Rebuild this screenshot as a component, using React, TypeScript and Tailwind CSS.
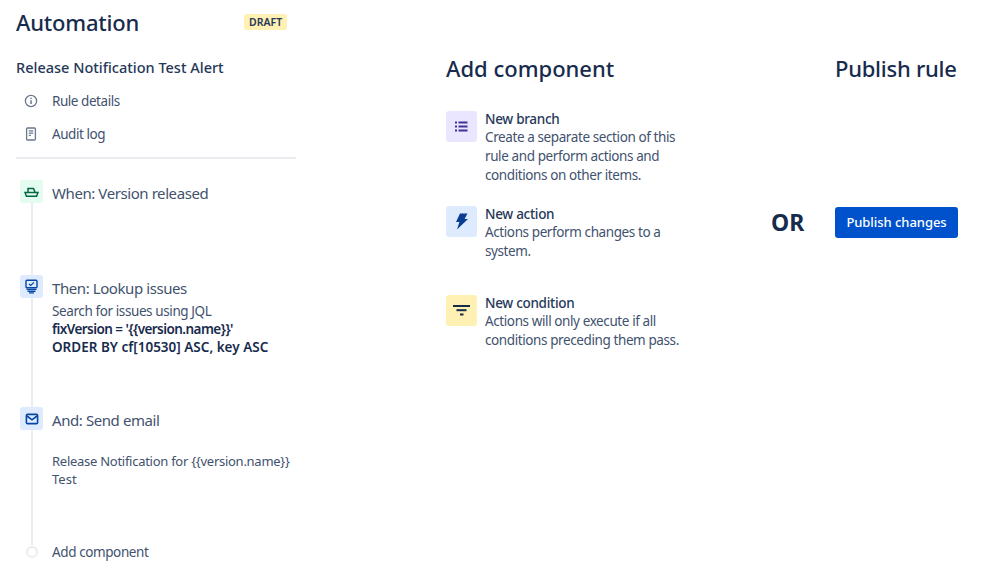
const FONT = "font-['Noto_Sans','Open_Sans',sans-serif]";

function ComponentOption({
  icon,
  bg,
  title,
  lines,
  height,
}: {
  icon: React.ReactNode;
  bg: string;
  title: string;
  lines: string[];
  height: string;
}) {
  return (
    <div className={`flex ${height}`}>
      <div className={`w-[31px] h-[31px] rounded-[3px] flex items-center justify-center shrink-0 ${bg}`}>{icon}</div>
      <div className="ml-[8px] -mt-[1px]">
        <div className="text-[13.5px] leading-[18px] tracking-[-0.3px] font-medium text-[#253858]">{title}</div>
        {lines.map((l) => (
          <div key={l} className="text-[13.5px] leading-[19px] tracking-[-0.4px] text-[#42526e] whitespace-nowrap">
            {l}
          </div>
        ))}
      </div>
    </div>
  );
}

function Step({
  icon,
  bg,
  title,
  height,
  children,
}: {
  icon: React.ReactNode;
  bg: string;
  title: string;
  height: string;
  children?: React.ReactNode;
}) {
  return (
    <div className={`flex ${height}`}>
      <div className="w-[23px] flex flex-col items-center shrink-0">
        <div className={`w-[23px] h-[23px] rounded-[3px] flex items-center justify-center shrink-0 ${bg}`}>{icon}</div>
        <div className="w-[2px] flex-1 bg-[#ebecf0]" />
      </div>
      <div className="ml-[9px]">
        <div className="pt-[2px] text-[15px] leading-[23px] tracking-[-0.42px] text-[#42526e] whitespace-nowrap">
          {title}
        </div>
        {children}
      </div>
    </div>
  );
}

export default function App() {
  return (
    <div className={`${FONT} w-[998px] h-[587px] bg-white flex overflow-hidden`}>
      {/* Left: rule outline */}
      <div className="w-[296px] ml-4 shrink-0">
        <div className="flex items-center h-[24px] mt-[10px]">
          <h1 className="text-[22px] leading-[24px] tracking-[-0.2px] font-medium text-[#172b4d]">Automation</h1>
          <span className="ml-[105px] h-[16px] px-[5px] rounded-[3px] bg-[#fff0b3] text-[10.5px] leading-[16px] font-semibold text-[#253858]">
            DRAFT
          </span>
        </div>
        <div className="mt-[23px] text-[14.5px] leading-[20px] font-medium text-[#253858] whitespace-nowrap">
          Release Notification Test Alert
        </div>
        <div className="mt-[15px] flex items-center h-[18px] pl-[8px] text-[13.5px] tracking-[-0.45px] text-[#42526e]">
          <svg width="14" height="14" viewBox="0 0 14 14" fill="none" stroke="#6b778c" strokeWidth="1.3">
            <circle cx="7" cy="7" r="5.6" />
            <path d="M7 6.3v3.6" strokeWidth="1.5" />
            <path d="M7 3.8v1.3" strokeWidth="1.5" />
          </svg>
          <span className="ml-[14px]">Rule details</span>
        </div>
        <div className="mt-[15px] flex items-center h-[18px] pl-[8px] text-[13.5px] tracking-[-0.45px] text-[#42526e]">
          <svg width="14" height="14" viewBox="0 0 14 14" fill="none" stroke="#6b778c" strokeWidth="1.3">
            <rect x="2.6" y="1" width="8.8" height="12" rx="1" />
            <path d="M4.8 3.8h4.4M4.8 6.2h4.4M4.8 8.4h2" />
          </svg>
          <span className="ml-[14px]">Audit log</span>
        </div>
        <div className="mt-[14px] h-[2px] w-[280px] bg-[#ebecf0]" />

        <div className="mt-[21px] ml-[4px]">
          <Step
            bg="bg-[#e3fcef]"
            title="When: Version released"
            height="h-[95px]"
            icon={
              <svg width="15" height="14" viewBox="0 0 15 14" fill="none" stroke="#006644" strokeWidth="1.5">
                <path d="M1 7.4h13l-1.4 3.8H2.4z" />
                <path d="M4 7V3.6h5.5L11 7" />
              </svg>
            }
          />
          <Step
            bg="bg-[#deebff]"
            title="Then: Lookup issues"
            height="h-[132px]"
            icon={
              <svg width="15" height="15" viewBox="0 0 15 15" fill="none" stroke="#0747a6" strokeWidth="1.4">
                <rect x="2" y="1.2" width="11" height="7.6" rx="1" />
                <path d="M5 5l1.7 1.5L10 3.4" strokeWidth="1.2" />
                <path d="M2.5 10.4h10M3.5 12.2h8M5 13.9h5" />
              </svg>
            }
          >
            <div className="mt-[2px] text-[13.5px] leading-[18px] tracking-[-0.4px] text-[#42526e] whitespace-nowrap">
              Search for issues using JQL
            </div>
            <div className="text-[13.5px] leading-[18px] tracking-[-0.55px] font-semibold text-[#172b4d] whitespace-nowrap">
              {"fixVersion = '{{version.name}}'"}
            </div>
            <div className="text-[13.5px] leading-[18px] font-semibold text-[#172b4d] whitespace-nowrap">
              ORDER BY cf[10530] ASC, key ASC
            </div>
          </Step>
          <Step
            bg="bg-[#deebff]"
            title="And: Send email"
            height="h-[138px]"
            icon={
              <svg width="14" height="14" viewBox="0 0 14 14" fill="none" stroke="#0747a6" strokeWidth="1.6">
                <rect x="1.4" y="2.4" width="11.2" height="9.2" rx="1.2" />
                <path d="M2 4l5 3.8L12 4" />
              </svg>
            }
          >
            <div className="mt-[20px] text-[13px] leading-[18px] tracking-[-0.27px] text-[#42526e] whitespace-nowrap">
              {"Release Notification for {{version.name}}"}
            </div>
            <div className="text-[13px] leading-[18px] text-[#42526e]">Test</div>
          </Step>
          <div className="flex items-center h-[14px]">
            <div className="w-[23px] flex justify-center shrink-0">
              <div className="w-[12px] h-[12px] rounded-full border-2 border-[#ebecf0] bg-white" />
            </div>
            <span className="ml-[9px] text-[13.5px] tracking-[-0.4px] text-[#42526e] whitespace-nowrap">
              Add component
            </span>
          </div>
        </div>
      </div>

      {/* Middle: add component */}
      <div className="w-[389px] ml-[134px] shrink-0">
        <h2 className="mt-[53px] text-[22px] leading-[30px] font-medium text-[#172b4d]">Add component</h2>
        <div className="mt-[28px]">
          <ComponentOption
            bg="bg-[#eae6ff]"
            title="New branch"
            height="h-[95px]"
            lines={["Create a separate section of this", "rule and perform actions and", "conditions on other items."]}
            icon={
              <svg width="13" height="11" viewBox="0 0 13 11" fill="#403294">
                <rect x="0" y="0.5" width="2" height="2" />
                <rect x="0" y="4.5" width="2" height="2" />
                <rect x="0" y="8.5" width="2" height="2" />
                <rect x="3.5" y="0.5" width="9" height="2" />
                <rect x="3.5" y="4.5" width="9" height="2" />
                <rect x="3.5" y="8.5" width="9" height="2" />
              </svg>
            }
          />
          <ComponentOption
            bg="bg-[#deebff]"
            title="New action"
            height="h-[89px]"
            lines={["Actions perform changes to a", "system."]}
            icon={
              <svg width="13" height="17" viewBox="0 0 13 17" fill="#0b3d91">
                <path d="M5 0.5h7.5L9.6 6H13L2 16.5 4.4 9H1z" />
              </svg>
            }
          />
          <ComponentOption
            bg="bg-[#fff0b3]"
            title="New condition"
            height="h-[60px]"
            lines={["Actions will only execute if all", "conditions preceding them pass."]}
            icon={
              <svg width="17" height="11" viewBox="0 0 17 11" fill="#172b4d">
                <rect x="0" y="0" width="17" height="2" />
                <rect x="3.5" y="4.2" width="10" height="2" />
                <rect x="7" y="8.5" width="3.5" height="2" />
              </svg>
            }
          />
        </div>
      </div>

      {/* Right: publish */}
      <div className="flex-1">
        <h2 className="mt-[53px] text-[22px] leading-[30px] tracking-[-0.25px] font-medium text-[#172b4d] whitespace-nowrap">
          Publish rule
        </h2>
        <div className="mt-[124px] -ml-[64px] flex items-center">
          <span className="w-[64px] text-[23px] leading-[31px] font-bold text-[#172b4d]">OR</span>
          <button className="h-[31px] w-[123px] rounded-[3px] bg-[#0052cc] text-white text-[13px] tracking-[-0.05px] font-medium whitespace-nowrap">
            Publish changes
          </button>
        </div>
      </div>
    </div>
  );
}
